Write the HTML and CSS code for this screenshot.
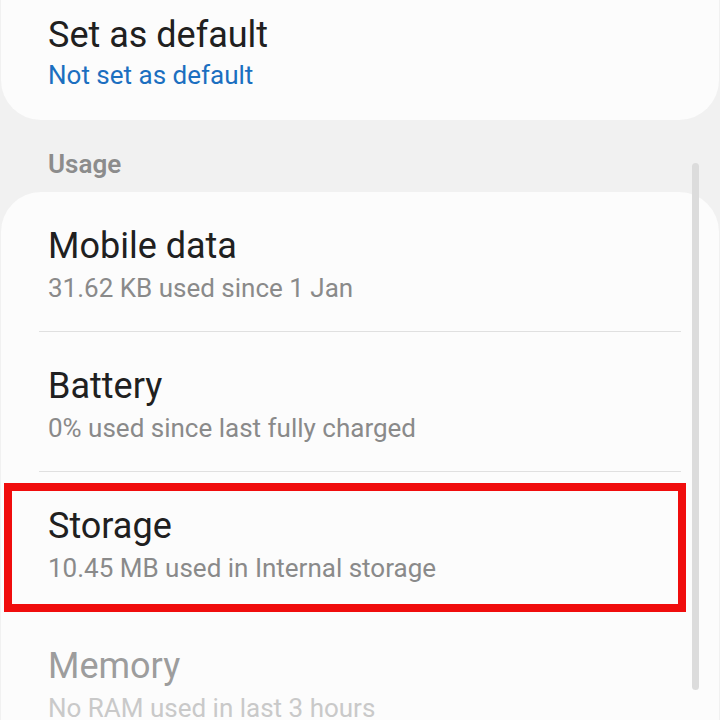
FILE: index.html
```html
<!DOCTYPE html>
<html lang="en">
<head>
<meta charset="utf-8">
<title>App info</title>
<link rel="stylesheet" href="styles.css">
</head>
<body>
<div class="screen">
  <section class="card card-top">
    <div class="item">
      <div class="title">Set as default</div>
      <div class="sub sub-blue">Not set as default</div>
    </div>
  </section>

  <h2 class="section-label">Usage</h2>

  <section class="card card-usage">
    <div class="row">
      <div class="title">Mobile data</div>
      <div class="sub">31.62 KB used since 1 Jan</div>
    </div>
    <div class="row">
      <div class="title">Battery</div>
      <div class="sub">0% used since last fully charged</div>
    </div>
    <div class="row">
      <div class="title">Storage</div>
      <div class="sub">10.45 MB used in Internal storage</div>
    </div>
    <div class="row row-disabled">
      <div class="title">Memory</div>
      <div class="sub">No RAM used in last 3 hours</div>
    </div>
  </section>

  <div class="highlight"></div>
  <div class="scrollbar"></div>
</div>
</body>
</html>
```

FILE: styles.css
```css
html, body {
  margin: 0;
  padding: 0;
  background: #f1f1f1;
}

body {
  font-family: Roboto, "Noto Sans", "Liberation Sans", sans-serif;
  width: 720px;
  height: 720px;
  overflow: hidden;
}

.screen {
  position: relative;
  width: 720px;
  height: 720px;
  overflow: hidden;
}

.card {
  background: #fcfcfc;
  margin: 0 1px;
}

.card-top {
  border-radius: 0 0 40px 40px;
  padding: 14px 0 30px 47px;
}

.title {
  font-size: 36px;
  line-height: 42px;
  color: #202020;
  font-weight: 400;
}

.sub {
  font-size: 26px;
  line-height: 30px;
  color: #8a8a8a;
}

.card-top .sub {
  margin-top: 4px;
}

.sub-blue {
  color: #1b6fc0;
}

.section-label {
  margin: 29px 0 13px 0;
  padding-left: 48px;
  font-size: 26px;
  line-height: 30px;
  font-weight: 600;
  color: #8c8c8c;
}

.card-usage {
  border-radius: 40px;
  padding: 0 38px 40px 38px;
}

.row {
  padding: 33px 0 28px 9px;
  border-bottom: 1px solid #e0e0e0;
}

.row .sub {
  margin-top: 6px;
}

.row-disabled {
  border-bottom: none;
}

.row-disabled .title {
  color: #9d9d9d;
}

.row-disabled .sub {
  color: #c9c9c9;
}

.highlight {
  position: absolute;
  left: 4px;
  top: 483px;
  width: 682px;
  height: 129px;
  box-sizing: border-box;
  border: 8px solid #f00d0d;
}

.scrollbar {
  position: absolute;
  left: 692px;
  top: 163px;
  width: 7px;
  height: 527px;
  border-radius: 4px;
  background: #dcdcdc;
}
```
